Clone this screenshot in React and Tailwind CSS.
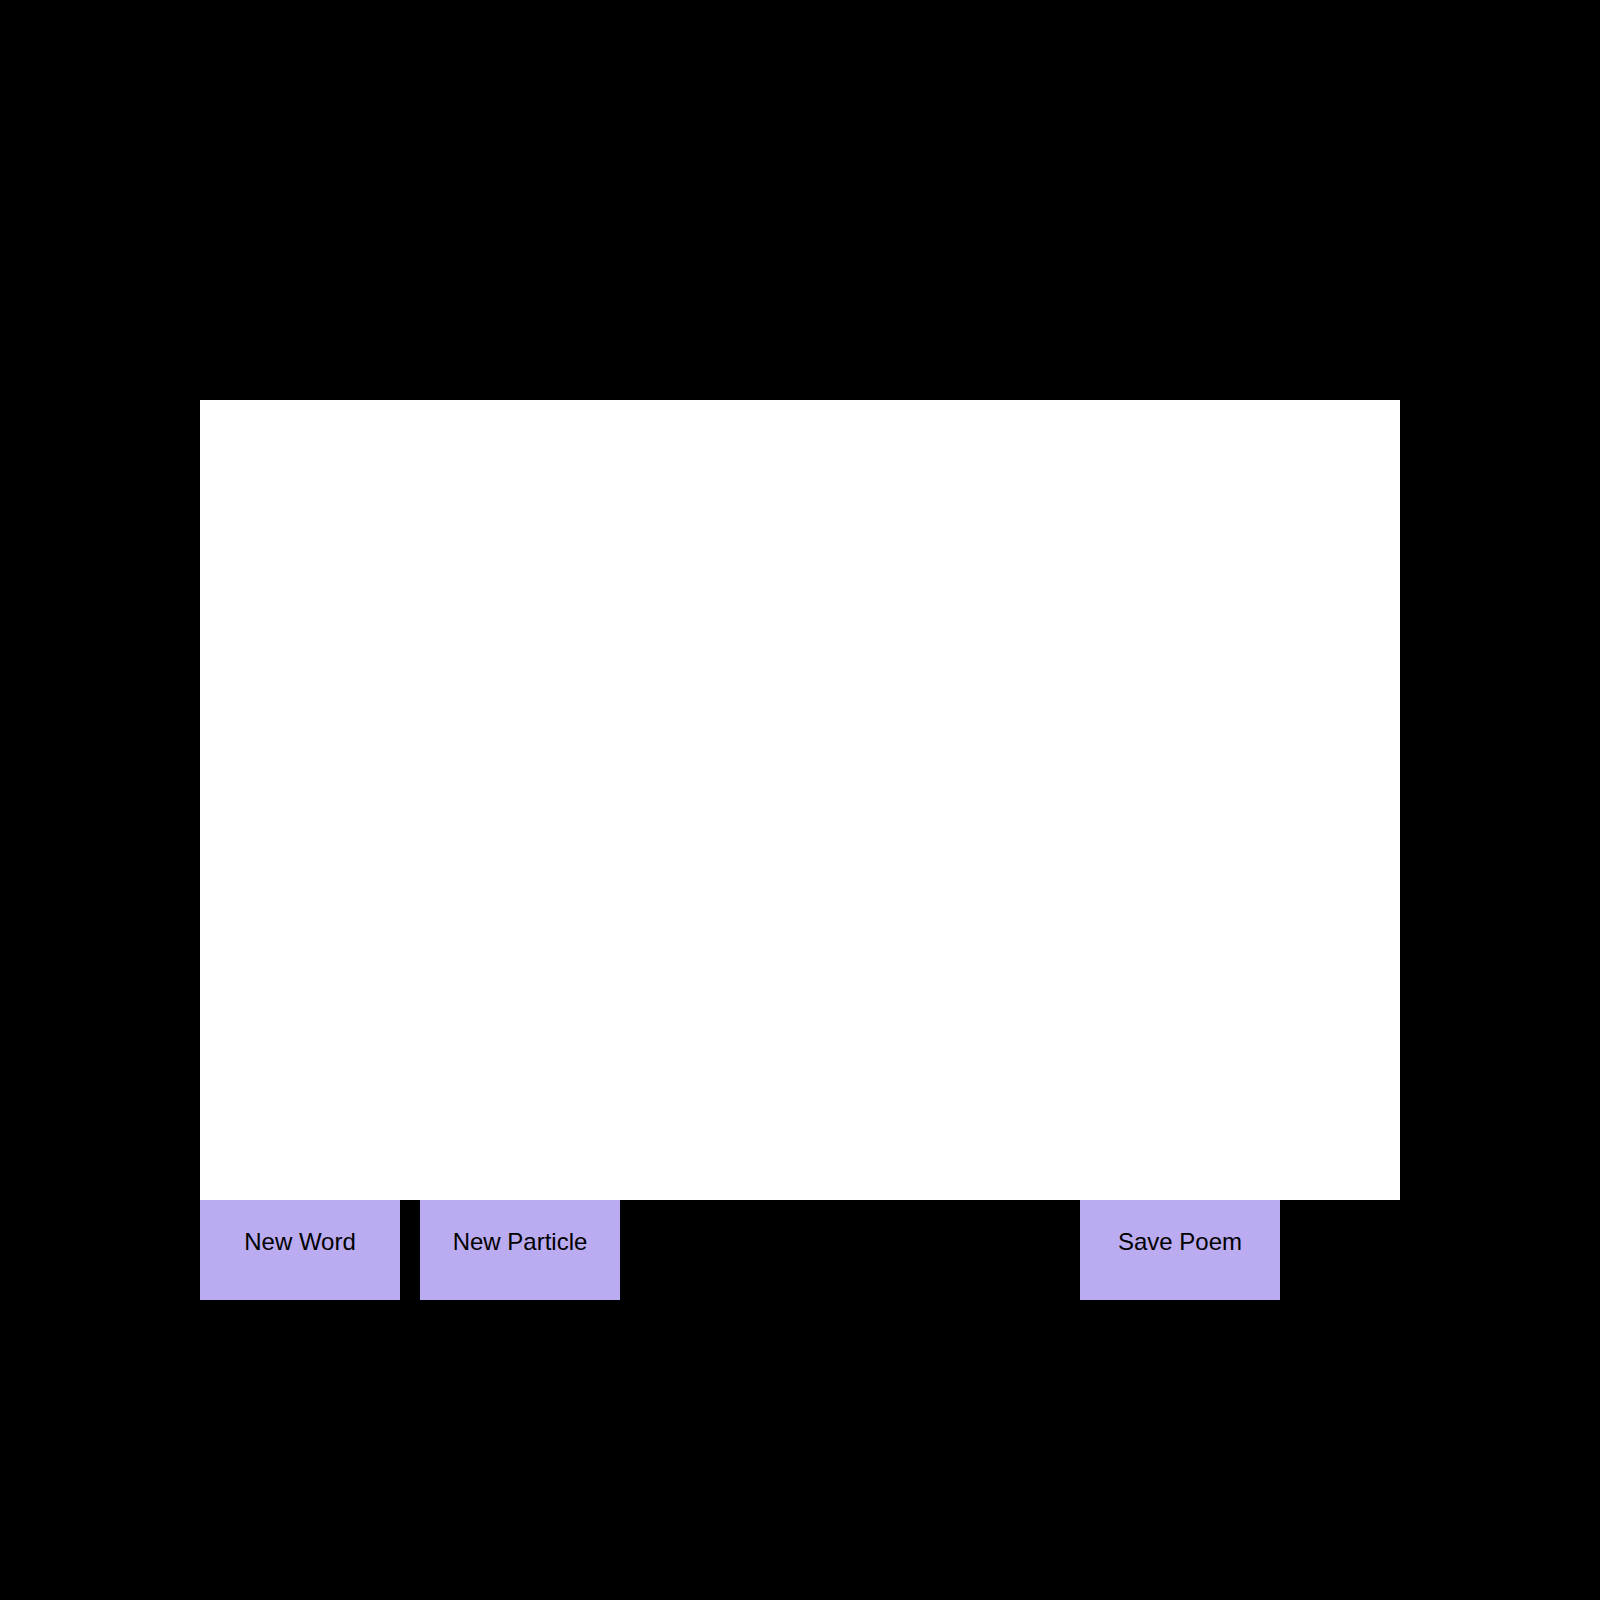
function PoemButton({ children, className = "" }) {
  return (
    <button
      type="button"
      className={`flex h-[100px] w-[200px] justify-center bg-[#bbabf0] pt-7 text-2xl leading-7 text-black ${className}`}
    >
      {children}
    </button>
  );
}

export default function App() {
  return (
    <div className="min-h-screen bg-black px-[12.5%] pt-[25%] font-['Liberation_Sans',Arial,sans-serif]">
      <main>
        <section aria-label="Poem" className="h-[50vh] bg-white" />
        <div className="flex gap-5 pr-[10%]">
          <PoemButton>New Word</PoemButton>
          <PoemButton>New Particle</PoemButton>
          <PoemButton className="ml-auto">Save Poem</PoemButton>
        </div>
      </main>
    </div>
  );
}
